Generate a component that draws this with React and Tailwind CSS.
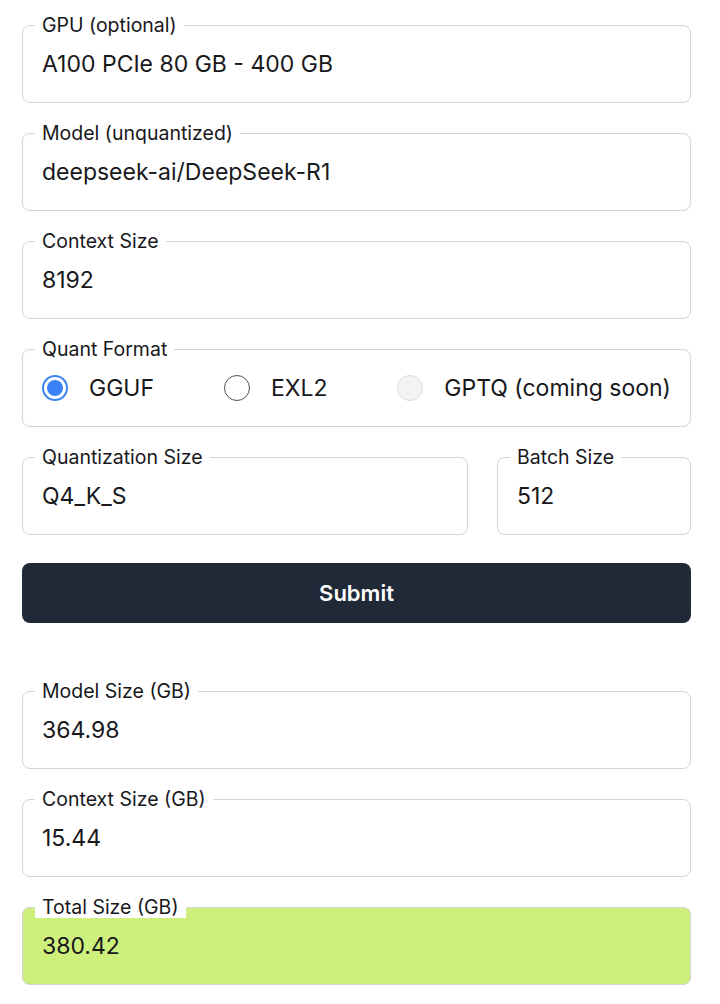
import React from "react";

const Field = ({ label, value, className = "", legendClass = "bg-transparent" }) => (
  <fieldset className={`border border-[#d4d4d8] rounded-lg px-[19px] pt-[13px] pb-[23px] ${className}`}>
    <legend className={`-ml-[7px] px-[7px] text-[19.5px] leading-[22px] text-[#18181b] ${legendClass}`}>{label}</legend>
    <div className="text-[23px] leading-[30px] text-[#18181b]">{value}</div>
  </fieldset>
);

const Radio = ({ label, checked, disabled }) => (
  <label className="flex items-center gap-[21px]">
    {checked ? (
      <span className="w-[26px] h-[26px] rounded-full border-2 border-[#3b82f6] flex items-center justify-center">
        <span className="w-[16px] h-[16px] rounded-full bg-[#3b82f6]" />
      </span>
    ) : disabled ? (
      <span className="w-[26px] h-[26px] rounded-full border border-[#dcdcdc] bg-[#f4f4f5]" />
    ) : (
      <span className="w-[26px] h-[26px] rounded-full border-[1.5px] border-[#52525b] bg-white" />
    )}
    <span className="text-[23px] leading-[30px] text-[#18181b]">{label}</span>
  </label>
);

export default function App() {
  return (
    <div className="bg-white min-h-screen pt-[14px] pl-[22px] pr-[29px] font-['Inter',sans-serif]">
      <div className="flex flex-col gap-[19px]">
        <Field label="GPU (optional)" value="A100 PCIe 80 GB - 400 GB" />
        <Field label="Model (unquantized)" value="deepseek-ai/DeepSeek-R1" />
        <Field label="Context Size" value="8192" />
        <fieldset className="border border-[#d4d4d8] rounded-lg px-[19px] pt-[13px] pb-[23px]">
          <legend className="-ml-[7px] px-[7px] text-[19.5px] leading-[22px] text-[#18181b]">Quant Format</legend>
          <div className="flex items-center justify-between">
            <Radio label="GGUF" checked />
            <Radio label="EXL2" />
            <Radio label="GPTQ (coming soon)" disabled />
          </div>
        </fieldset>
        <div className="flex gap-[29px]">
          <Field label="Quantization Size" value="Q4_K_S" className="flex-1" />
          <Field label="Batch Size" value="512" className="w-[194px]" />
        </div>
      </div>
      <button className="mt-[28px] w-full h-[60px] rounded-lg bg-[#1f2937] text-white text-[22px] font-semibold">
        Submit
      </button>
      <div className="flex flex-col gap-[19px] mt-[57px]">
        <Field label="Model Size (GB)" value="364.98" />
        <Field label="Context Size (GB)" value="15.44" />
        <Field label="Total Size (GB)" value="380.42" className="bg-[#cdef7b]" legendClass="bg-white" />
      </div>
    </div>
  );
}
